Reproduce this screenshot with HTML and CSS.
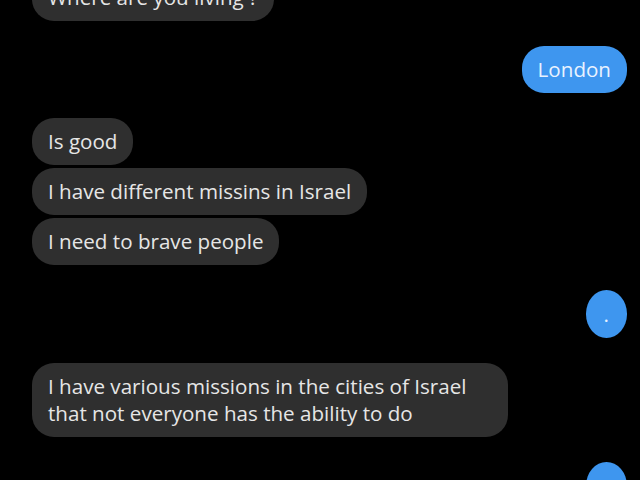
FILE: index.html
```html
<!DOCTYPE html>
<html lang="en">
<head>
  <meta charset="UTF-8">
  <title>Chat</title>
  <link rel="stylesheet" href="styles.css">
</head>
<body>

  <div class="chat">
    <div class="group in">
      <div class="bubble">Where are you living ?</div>
    </div>

    <div class="group out">
      <div class="bubble">London</div>
    </div>

    <div class="group in">
      <div class="bubble">Is good</div>
      <div class="bubble">I have different missins in Israel</div>
      <div class="bubble">I need to brave people</div>
    </div>

    <div class="group out">
      <div class="bubble dot">.</div>
    </div>

    <div class="group in">
      <div class="bubble wide">I have various missions in the cities of Israel<br>that not everyone has the ability to do</div>
    </div>

    <div class="group out">
      <div class="bubble dot">.</div>
    </div>
  </div>

</body>
</html>
```

FILE: styles.css
```css
body {
  margin: 0;
  background: #000;
  font-family: 'Open Sans', 'Noto Sans', sans-serif;
  color: #e6e6e6;
  overflow: hidden;
}

.chat {
  display: flex;
  flex-direction: column;
  gap: 25px;
  padding: 0 13px 0 32px;
  margin-top: -26px;
}

.group {
  display: flex;
  flex-direction: column;
  gap: 3px;
}

.group.in {
  align-items: flex-start;
}

.group.out {
  align-items: flex-end;
}

.bubble {
  font-size: 20.6px;
  line-height: 27px;
  padding: 10px 16px;
  border-radius: 22px;
  background: #2f2f2f;
}

.bubble.wide {
  padding-right: 42px;
}

.out .bubble {
  background: #3e96ef;
  color: #e8f2ff;
}

.bubble.dot {
  padding: 11px 18px 10px;
  border-radius: 50%;
}
```
